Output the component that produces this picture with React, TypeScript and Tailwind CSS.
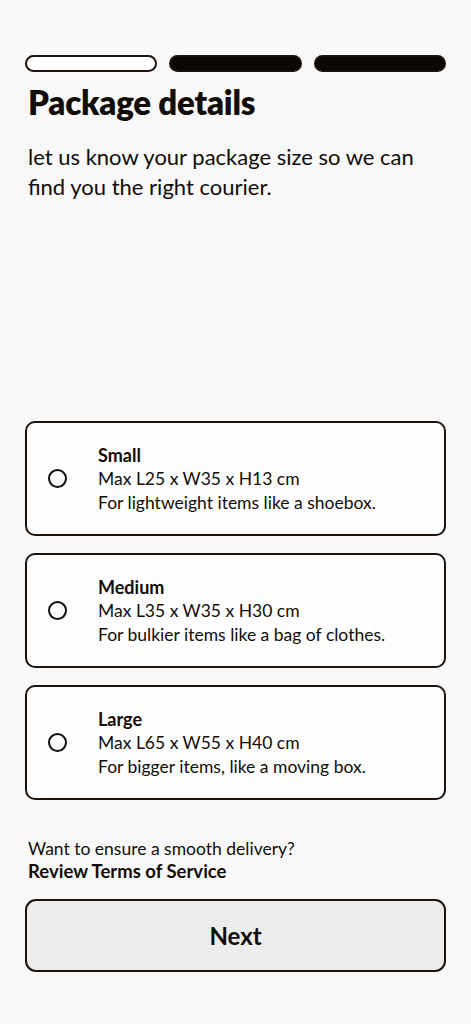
import { useState } from "react";

type Size = {
  id: string;
  name: string;
  dims: string;
  note: string;
};

const sizes: Size[] = [
  { id: "small", name: "Small", dims: "Max L25 x W35 x H13 cm", note: "For lightweight items like a shoebox." },
  { id: "medium", name: "Medium", dims: "Max L35 x W35 x H30 cm", note: "For bulkier items like a bag of clothes." },
  { id: "large", name: "Large", dims: "Max L65 x W55 x H40 cm", note: "For bigger items, like a moving box." },
];

const App = () => {
  const [selected, setSelected] = useState<string | null>(null);

  return (
    <div
      className="min-h-[1024px] w-full bg-[#f8f8f8] text-[#120d09] px-[25px] pt-[55px] pb-[52px] flex flex-col"
      style={{ fontFamily: "Lato, 'Open Sans', sans-serif" }}
    >
      {/* progress steps */}
      <div className="flex gap-3">
        <div className="h-[17px] flex-1 rounded-full border-2 border-[#1c130d] bg-white" />
        <div className="h-[17px] flex-1 rounded-full border-2 border-[#1c130d] bg-[#0c0806]" />
        <div className="h-[17px] flex-1 rounded-full border-2 border-[#1c130d] bg-[#0c0806]" />
      </div>

      <h1 className="mt-[10px] px-[3px] text-[33px] leading-[40px] font-extrabold tracking-[-0.2px]">Package details</h1>
      <p className="mt-[20px] px-[3px] text-[22px] leading-[30px] pr-[20px]">
        let us know your package size so we can find you the right courier.
      </p>

      <div className="mt-[219px] flex flex-col gap-[17px]">
        {sizes.map((s) => (
          <button
            key={s.id}
            onClick={() => setSelected(s.id)}
            className="h-[115px] w-full rounded-[10px] border-2 border-[#1c130d] bg-[#fdfdfd] flex items-center text-left"
          >
            <div className="w-[60px] flex justify-center shrink-0">
              <span className="w-[19px] h-[19px] rounded-full border-2 border-[#120d09] flex items-center justify-center">
                {selected === s.id && <span className="w-[8px] h-[8px] rounded-full bg-[#120d09]" />}
              </span>
            </div>
            <div className="ml-[11px] flex flex-col text-[17.5px] leading-[24px]">
              <span className="text-[18px] font-bold">{s.name}</span>
              <span>{s.dims}</span>
              <span>{s.note}</span>
            </div>
          </button>
        ))}
      </div>

      <div className="mt-[37px] px-[3px] text-[17.5px] leading-[23px]">
        <p>Want to ensure a smooth delivery?</p>
        <p className="text-[18.5px] font-bold">Review Terms of Service</p>
      </div>

      <button className="mt-[16px] h-[73px] w-full rounded-[11px] border-2 border-[#1c130d] bg-[#ececec] text-[24px] font-bold">
        Next
      </button>
    </div>
  );
};

export default App;
